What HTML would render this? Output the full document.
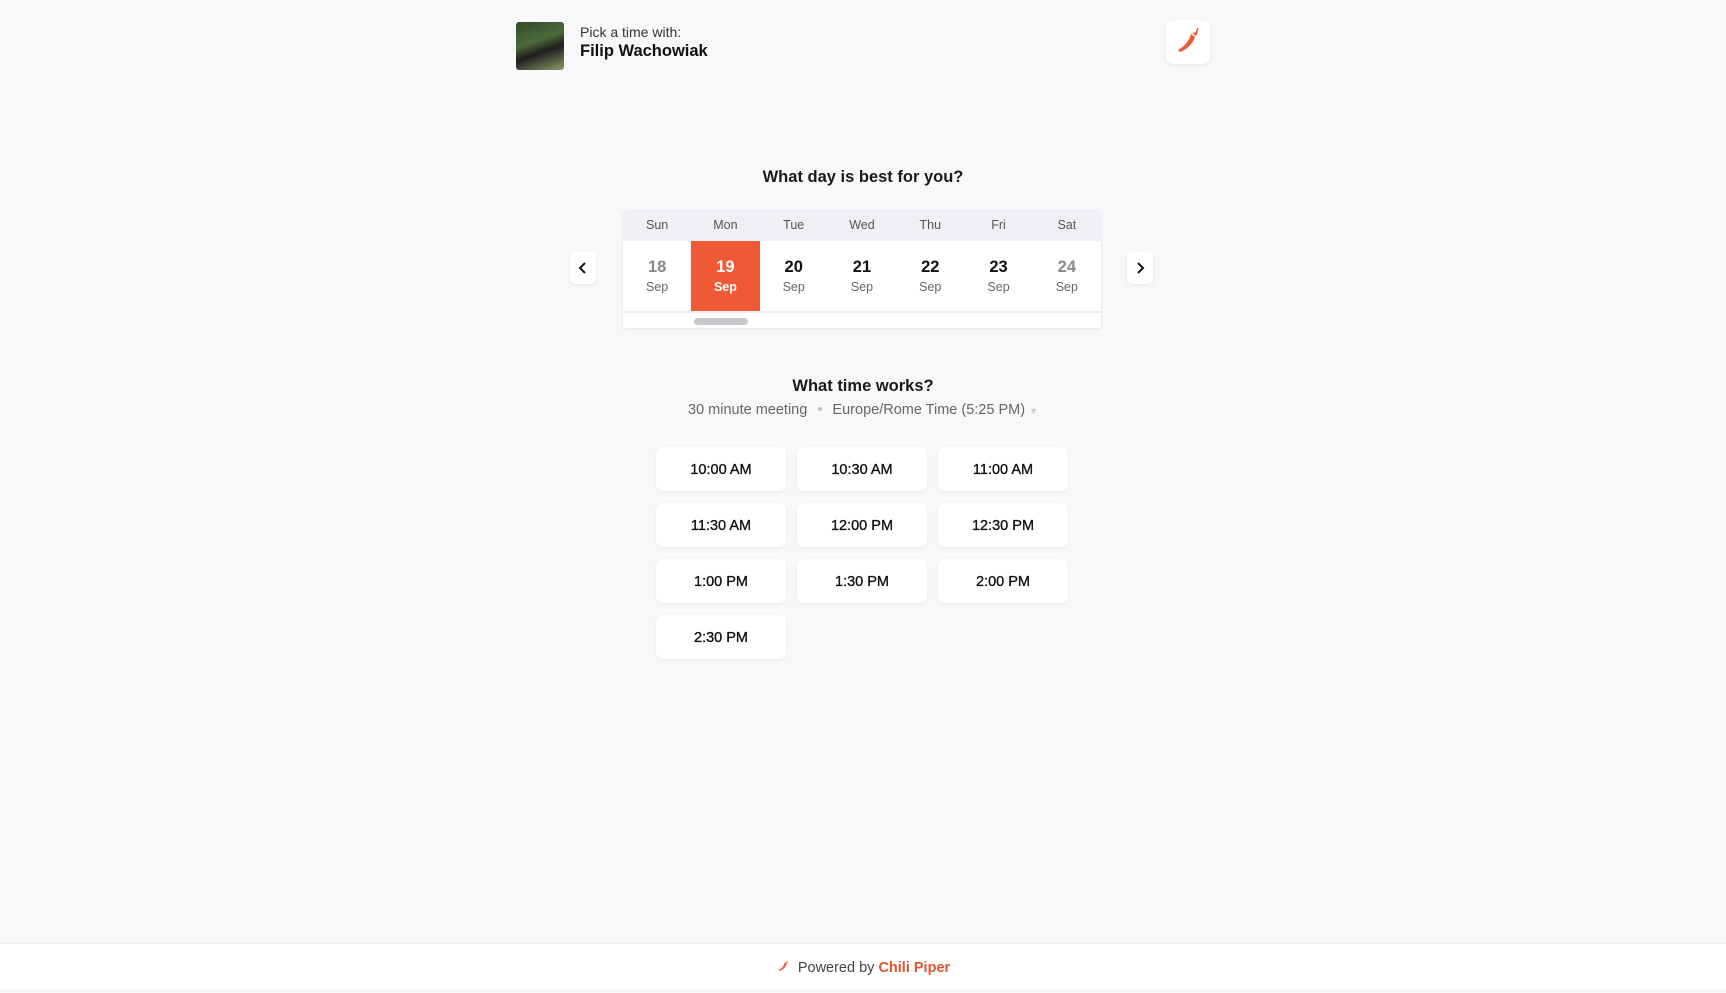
<!DOCTYPE html>
<html><head><meta charset="utf-8"><style>
*{box-sizing:border-box;margin:0;padding:0}
body{width:1726px;height:989px;background:#f7f8fa;font-family:"Liberation Sans",Arial,sans-serif;color:#111;position:relative;overflow:hidden}
.abs{position:absolute}
.avatar{left:516px;top:22px;width:48px;height:48px;border-radius:3px;background:linear-gradient(160deg,#2f4a2a 0%,#4c6b3a 40%,#1e1e1e 60%,#8c9a6a 100%)}
.logo{left:1166px;top:20px;width:44px;height:44px;background:#fff;border-radius:8px;box-shadow:0 1px 4px rgba(0,0,0,.08)}
h2{font-size:16.5px;font-weight:700;text-align:center;width:100%;color:#1a1a1a}
.cal{left:623px;top:210px;width:478px;height:118px;background:#fff;border-radius:6px 6px 2px 2px;box-shadow:0 1px 3px rgba(0,0,0,.08);overflow:hidden}
.hdr{display:flex;height:31px;background:#eef0f3}
.hdr div,.days div{flex:1;text-align:center}
.hdr div{font-size:12.5px;color:#555;line-height:31px}
.days{display:flex;height:72px;border-bottom:2px solid #eceef1}
.days div{padding-top:17px}
.days b{display:block;font-size:16.5px;color:#111}
.days span{display:block;font-size:12.5px;color:#666;margin-top:3px}
.days .dim b{color:#888}
.days .sel{background:#ee5a36}
.days .sel b,.days .sel span{color:#fff;font-weight:700}
.sb{left:694px;top:318px;width:54px;height:7px;background:#c8c9cc;border-radius:4px}
.arr{width:26px;height:32px;background:#fff;border-radius:5px;box-shadow:0 1px 3px rgba(0,0,0,.08);top:252px}
.btn{position:absolute;width:130px;height:44px;background:#fff;border-radius:7px;box-shadow:0 1px 3px rgba(0,0,0,.07);font-size:14.5px;text-align:center;line-height:46px;color:#111;-webkit-text-stroke:0.35px #111}
.foot{left:0;top:943px;width:1726px;height:46px;background:#fff;border-top:1px solid #eceef1;text-align:center;font-size:14.5px;line-height:49px;color:#444}
</style></head><body>
<div class="abs avatar"></div>
<div class="abs" style="left:580px;top:24px;font-size:14px;color:#333">Pick a time with:</div>
<div class="abs" style="left:580px;top:42px;font-size:16.5px;font-weight:700;color:#111">Filip Wachowiak</div>
<div class="abs logo"><svg width="44" height="44" viewBox="0 0 44 44"><path d="M14 32 C20 30 27 24 29 17 L25 14 C23 21 18 27 12 30 Z" fill="#ee5a36"/><path d="M26 13 L30 16 L32 12 Z" fill="#ee5a36"/><path d="M30 13 L32 8" stroke="#ee5a36" stroke-width="1.5"/></svg></div>
<h2 class="abs" style="top:168px;left:0">What day is best for you?</h2>
<div class="abs arr" style="left:570px"><svg width="26" height="32"><path d="M15 11 L10 16 L15 21" stroke="#111" stroke-width="2" fill="none"/></svg></div>
<div class="abs arr" style="left:1127px"><svg width="26" height="32"><path d="M11 11 L16 16 L11 21" stroke="#111" stroke-width="2" fill="none"/></svg></div>
<div class="abs cal">
<div class="hdr"><div>Sun</div><div>Mon</div><div>Tue</div><div>Wed</div><div>Thu</div><div>Fri</div><div>Sat</div></div>
<div class="days"><div class="dim"><b>18</b><span>Sep</span></div><div class="sel"><b>19</b><span>Sep</span></div><div><b>20</b><span>Sep</span></div><div><b>21</b><span>Sep</span></div><div><b>22</b><span>Sep</span></div><div><b>23</b><span>Sep</span></div><div class="dim"><b>24</b><span>Sep</span></div></div>
</div>
<div class="abs sb"></div>
<h2 class="abs" style="top:377px;left:0">What time works?</h2>
<div class="abs" style="top:402px;left:0;width:100%;text-align:center;font-size:14.5px;color:#666">30 minute meeting <span style="color:#bbb;margin:0 6px">•</span> Europe/Rome Time (5:25 PM) <span style="color:#ccc;font-size:9px">▼</span></div>
<div class="btn" style="left:656px;top:447px">10:00 AM</div>
<div class="btn" style="left:797px;top:447px">10:30 AM</div>
<div class="btn" style="left:938px;top:447px">11:00 AM</div>
<div class="btn" style="left:656px;top:503px">11:30 AM</div>
<div class="btn" style="left:797px;top:503px">12:00 PM</div>
<div class="btn" style="left:938px;top:503px">12:30 PM</div>
<div class="btn" style="left:656px;top:559px">1:00 PM</div>
<div class="btn" style="left:797px;top:559px">1:30 PM</div>
<div class="btn" style="left:938px;top:559px">2:00 PM</div>
<div class="btn" style="left:656px;top:615px">2:30 PM</div>
<div class="abs foot"><svg width="16" height="16" viewBox="0 0 44 44" style="vertical-align:-2px;margin-right:6px"><path d="M10 36 C18 33 27 25 30 16 L24 12 C22 21 16 29 8 33 Z" fill="#ee5a36"/><path d="M26 11 L31 15 L33 9 Z" fill="#ee5a36"/></svg>Powered by <span style="color:#e0552f;font-weight:700">Chili Piper</span></div>
</body></html>
